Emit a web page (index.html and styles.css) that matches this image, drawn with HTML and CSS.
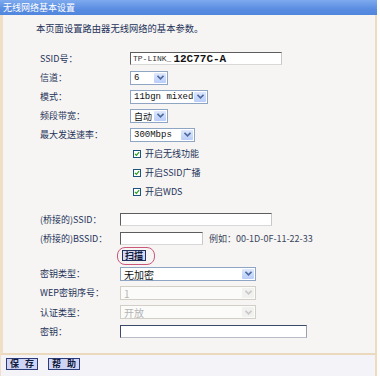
FILE: index.html
```html
<!DOCTYPE html>
<html lang="zh-CN">

<head>
    <meta charset="UTF-8">
    <title>无线网络基本设置</title>
    <link rel="stylesheet" href="styles.css">
</head>

<body>
    <div class="page">
        <div class="title">无线网络基本设置</div>

        <div class="content">
            <div class="intro">本页面设置路由器无线网络的基本参数。</div>

            <!-- basic settings -->
            <div class="form wide">
                <div class="row">
                    <span class="label">SSID号：</span>
                    <div class="textbox ssid"><span class="prefix">TP-LINK_</span><span class="suffix">12C77C-A</span></div>
                </div>
                <div class="row">
                    <span class="label">信道：</span>
                    <div class="select w-channel"><span class="value mono">6</span><span class="arrow"><svg width="7" height="5" viewBox="0 0 7 5"><path d="M0.5 0.8 L3.5 3.8 L6.5 0.8" fill="none" stroke="currentColor" stroke-width="1.6"/></svg></span></div>
                </div>
                <div class="row">
                    <span class="label">模式：</span>
                    <div class="select w-mode"><span class="value mono">11bgn mixed</span><span class="arrow"><svg width="7" height="5" viewBox="0 0 7 5"><path d="M0.5 0.8 L3.5 3.8 L6.5 0.8" fill="none" stroke="currentColor" stroke-width="1.6"/></svg></span></div>
                </div>
                <div class="row">
                    <span class="label">频段带宽：</span>
                    <div class="select w-channel"><span class="value">自动</span><span class="arrow"><svg width="7" height="5" viewBox="0 0 7 5"><path d="M0.5 0.8 L3.5 3.8 L6.5 0.8" fill="none" stroke="currentColor" stroke-width="1.6"/></svg></span></div>
                </div>
                <div class="row">
                    <span class="label">最大发送速率：</span>
                    <div class="select w-rate"><span class="value mono">300Mbps</span><span class="arrow"><svg width="7" height="5" viewBox="0 0 7 5"><path d="M0.5 0.8 L3.5 3.8 L6.5 0.8" fill="none" stroke="currentColor" stroke-width="1.6"/></svg></span></div>
                </div>

                <div class="row check">
                    <span class="box"><svg width="8" height="8" viewBox="0 0 8 8"><path d="M1.2 3.8 L3.2 5.8 L6.8 1.6" fill="none" stroke="#21a121" stroke-width="1.6"/></svg></span>
                    <span>开启无线功能</span>
                </div>
                <div class="row check">
                    <span class="box"><svg width="8" height="8" viewBox="0 0 8 8"><path d="M1.2 3.8 L3.2 5.8 L6.8 1.6" fill="none" stroke="#21a121" stroke-width="1.6"/></svg></span>
                    <span>开启SSID广播</span>
                </div>
                <div class="row check">
                    <span class="box"><svg width="8" height="8" viewBox="0 0 8 8"><path d="M1.2 3.8 L3.2 5.8 L6.8 1.6" fill="none" stroke="#21a121" stroke-width="1.6"/></svg></span>
                    <span>开启WDS</span>
                </div>
            </div>

            <!-- WDS settings -->
            <div class="form narrow">
                <div class="row">
                    <span class="label">(桥接的)SSID：</span>
                    <div class="textbox w-ssid"></div>
                </div>
                <div class="row short">
                    <span class="label">(桥接的)BSSID：</span>
                    <div class="textbox w-bssid"></div>
                    <span class="hint">例如：00-1D-0F-11-22-33</span>
                </div>
                <div class="row scan-row">
                    <span class="mark"><span class="scan">扫描</span></span>
                </div>
                <div class="row">
                    <span class="label">密钥类型：</span>
                    <div class="select w-key"><span class="value big">无加密</span><span class="arrow"><svg width="7" height="5" viewBox="0 0 7 5"><path d="M0.5 0.8 L3.5 3.8 L6.5 0.8" fill="none" stroke="currentColor" stroke-width="1.6"/></svg></span></div>
                </div>
                <div class="row">
                    <span class="label">WEP密钥序号：</span>
                    <div class="select w-key disabled"><span class="value big">1</span><span class="arrow"><svg width="7" height="5" viewBox="0 0 7 5"><path d="M0.5 0.8 L3.5 3.8 L6.5 0.8" fill="none" stroke="currentColor" stroke-width="1.6"/></svg></span></div>
                </div>
                <div class="row tall">
                    <span class="label">认证类型：</span>
                    <div class="select w-key disabled"><span class="value big">开放</span><span class="arrow"><svg width="7" height="5" viewBox="0 0 7 5"><path d="M0.5 0.8 L3.5 3.8 L6.5 0.8" fill="none" stroke="currentColor" stroke-width="1.6"/></svg></span></div>
                </div>
                <div class="row">
                    <span class="label">密钥：</span>
                    <div class="textbox w-pass"></div>
                </div>
            </div>
        </div>

        <div class="footer">
            <span class="btn">保 存</span>
            <span class="btn">帮 助</span>
        </div>
    </div>
</body>

</html>
```

FILE: styles.css
```css
body {
    margin: 0;
    background-color: #fdfdfb;
    font-family: "Noto Sans CJK SC", "Liberation Sans", sans-serif;
    font-size: 9px;
    color: #25335a;
}

.page {
    width: 377px;
    height: 376px;
    display: flex;
    flex-direction: column;
}

.title {
    height: 15px;
    line-height: 15px;
    padding-left: 3px;
    color: #fff;
    background: linear-gradient(#7eaaee, #5a8de2 60%, #4f86dc);
}

.content {
    flex: 1;
    background-color: #f6f5f3;
    border-left: 3px solid #efdfc4;
    border-right: 2px solid #eddcc0;
    border-bottom: 2px solid #ead9bd;
    padding-left: 37px;
}

.intro {
    height: 20px;
    line-height: 20px;
    margin: 3px 0 11px -4px;
    font-size: 9.3px;
}

.row {
    display: flex;
    align-items: center;
    height: 19px;
    white-space: nowrap;
}

.row.short {
    height: 18px;
}

.row.tall {
    height: 20px;
}

.label {
    flex: none;
}

.wide .label {
    width: 90px;
}

.narrow {
    margin-top: 9px;
}

.narrow .label {
    width: 80px;
}

/* text boxes */
.textbox {
    box-sizing: border-box;
    height: 13px;
    background-color: #fff;
    border: 1px solid;
    border-color: #5d5d5d #c8c8c8 #d8d8d8 #5d5d5d;
    display: flex;
    align-items: center;
}

.ssid {
    width: 152px;
    padding-left: 2px;
}

.ssid .prefix {
    font-family: "Liberation Mono", monospace;
    font-size: 8px;
    color: #333;
}

.ssid .suffix {
    font-family: "Liberation Mono", monospace;
    font-size: 11px;
    font-weight: bold;
    color: #111;
    margin-left: 2px;
}

.w-ssid {
    width: 152px;
}

.w-bssid {
    width: 83px;
}

.w-pass {
    width: 187px;
    border-color: #3c4a6a #9aa0b0 #b8bcc8 #3c4a6a;
}

.hint {
    margin-left: 6px;
    color: #3a4660;
}

/* drop-downs */
.select {
    box-sizing: border-box;
    height: 14px;
    border: 1px solid #8ea6c4;
    background-color: #fff;
    display: flex;
    align-items: stretch;
    padding: 1px;
}

.select .value {
    flex: 1;
    padding-left: 2px;
    line-height: 11px;
    color: #111;
}

.select .mono {
    font-family: "Liberation Mono", monospace;
    font-size: 9px;
}

.select .big {
    font-size: 10px;
}

.select .arrow {
    flex: none;
    width: 12px;
    background: linear-gradient(#dfe8fd, #b9cdf8);
    border-radius: 1px;
    color: #4d6a9e;
    display: flex;
    align-items: center;
    justify-content: center;
}

.w-channel {
    width: 38px;
}

.w-mode {
    width: 78px;
}

.w-rate {
    width: 65px;
}

.w-key {
    width: 136px;
}

.select.disabled {
    border-color: #d2d0c6;
    background-color: #fbfbfa;
}

.select.disabled .value {
    color: #b4b4b4;
}

.select.disabled .arrow {
    background: #f1f1ef;
    color: #c8c8c8;
}

/* checkboxes */
.check {
    padding-left: 93px;
    gap: 4px;
}

.box {
    box-sizing: border-box;
    width: 8px;
    height: 8px;
    border: 1px solid #1c5180;
    background-color: #fff;
    display: flex;
    align-items: center;
    justify-content: center;
}

/* scan button with red ring */
.scan-row {
    height: 17px;
    padding-left: 77px;
}

.mark {
    display: flex;
    align-items: center;
    padding: 2px 8px 3px 4px;
    border: 1px solid #c9587a;
    border-radius: 8px;
}

.scan {
    box-sizing: border-box;
    height: 11px;
    line-height: 9px;
    padding: 0 2px;
    border: 1px solid #24325e;
    background-color: #d6d9f3;
    color: #101a3c;
    font-weight: bold;
}

/* footer */
.footer {
    height: 21px;
    box-sizing: border-box;
    padding: 3px 0 0 5px;
    display: flex;
    align-items: flex-start;
    gap: 10px;
    background-color: #f4f3f8;
    border-left: 1px solid #efdfc4;
    border-right: 2px solid #eddcc0;
}

.btn {
    box-sizing: border-box;
    height: 12px;
    line-height: 10px;
    padding: 0 1px 0 3px;
    letter-spacing: 2px;
    border: 1px solid #2c3c78;
    background-color: #cfd4f4;
    color: #101a3c;
    font-weight: bold;
}
```
